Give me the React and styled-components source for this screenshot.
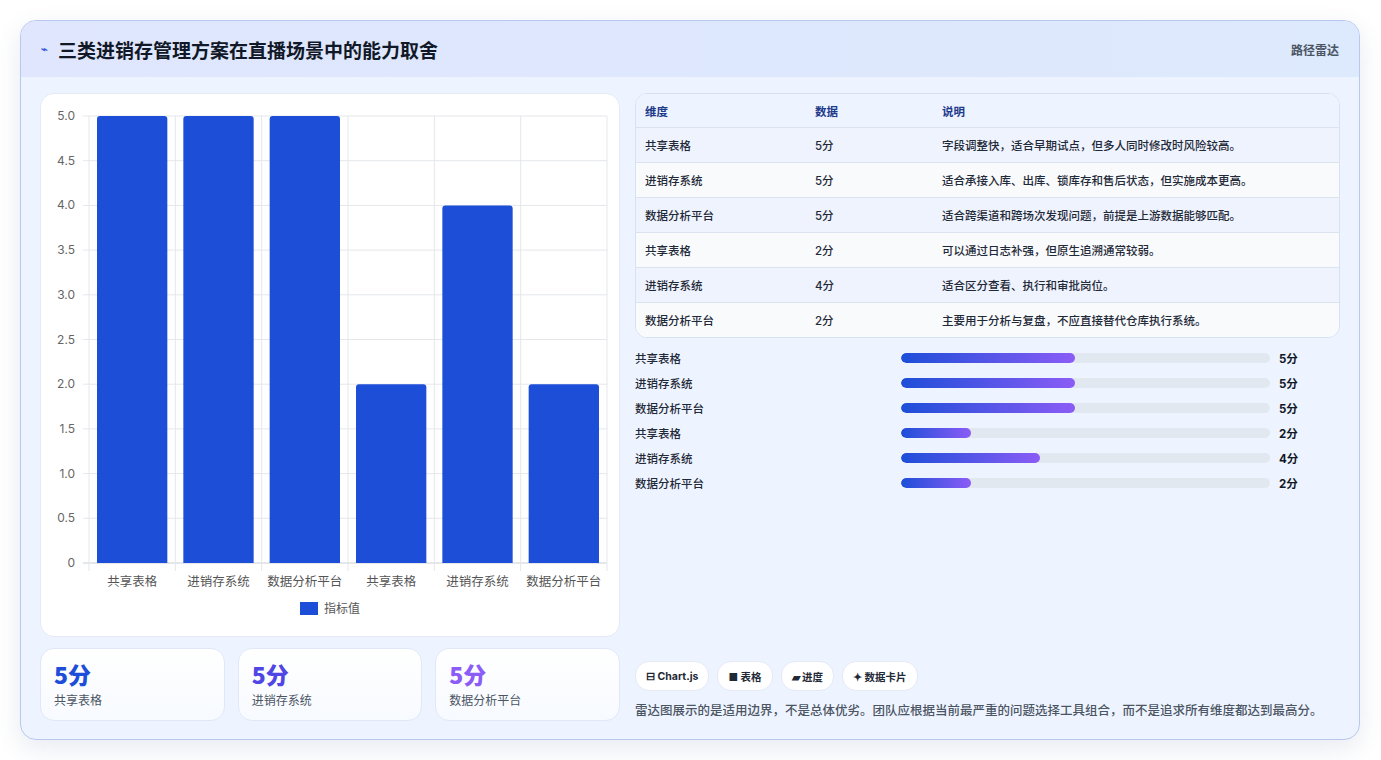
import React from "react";
import styled, { createGlobalStyle } from "styled-components";

const Global = createGlobalStyle`
  body { margin:0; background:#fff; font-family: Inter, "Noto Sans CJK SC", sans-serif; }
`;
const Page = styled.div`padding:20px 20px 20px 20px; height:760px; box-sizing:border-box;`;
const Card = styled.div`
  width:1340px; height:720px; box-sizing:border-box; border:1px solid #b9c8ee; border-radius:16px;
  background:#eef4ff; overflow:hidden; box-shadow:0 8px 24px rgba(60,80,140,0.12); display:flex; flex-direction:column;
`;
const Header = styled.div`
  height:56px; flex:none; background:linear-gradient(90deg,#dfe6fd,#dde9fd); display:flex; align-items:center;
  justify-content:space-between; padding:0 20px;
`;
const Title = styled.div`font-size:19px; font-weight:700; color:#111827; display:flex; align-items:center; gap:10px;`;
const Tag = styled.div`font-size:12px; color:#4b5563; font-weight:600;`;
const Body = styled.div`display:flex; gap:15px; padding:16px 19px 19px 19px; flex:1;`;
const Left = styled.div`width:580px; display:flex; flex-direction:column; gap:11px;`;
const ChartCard = styled.div`background:#fff; border:1px solid #e3e9f5; border-radius:14px; height:544px; box-sizing:border-box;`;
const Stats = styled.div`display:grid; grid-template-columns:repeat(3,1fr); gap:13px;`;
const Stat = styled.div`background:linear-gradient(180deg,#fff,#f7faff); border:1px solid #e0e8f7; border-radius:14px; height:73px; box-sizing:border-box; padding:10px 13px;`;
const StatNum = styled.div`font-size:23px; font-weight:800; color:${p => p.c}; line-height:30px; font-family:"Noto Sans CJK SC",sans-serif;`;
const StatLbl = styled.div`font-size:12px; color:#4b5563; margin-top:2px;`;
const Right = styled.div`flex:1; display:flex; flex-direction:column;`;
const Table = styled.div`border:1px solid #d8e1f1; border-radius:12px; overflow:hidden; background:#f8fbff;`;
const Row = styled.div`
  display:grid; grid-template-columns:170px 127px 1fr; height:${p => p.h || 35}px; align-items:center; padding-left:9px;
  font-size:11.5px; color:${p => p.head ? "#1e3a8a" : "#1f2937"}; font-weight:${p => p.head ? 600 : 500};
  background:${p => p.head ? "#eef4ff" : p.alt ? "#f8fafc" : "#eef3fe"}; border-top:${p => p.head ? "none" : "1px solid #dbe3f1"};
  box-sizing:border-box;
`;
const Bars = styled.div`display:flex; flex-direction:column; gap:9px; margin-top:12px;`;
const BarRow = styled.div`display:grid; grid-template-columns:266px 369px 1fr; align-items:center; height:16px; font-size:11.5px; color:#1f2937; font-weight:500;`;
const Track = styled.div`height:10px; border-radius:5px; background:#e2e8f0; overflow:hidden;`;
const Fill = styled.div`height:100%; border-radius:5px; background:linear-gradient(90deg,#1d4ed8,#8b5cf6);`;
const Val = styled.div`padding-left:9px; font-weight:700; font-size:11.5px; color:#111827;`;
const Spacer = styled.div`flex:1;`;
const Chips = styled.div`display:flex; gap:8px;`;
const Chip = styled.div`height:28px; padding:0 10px; border:1px solid #e3e9f5; border-radius:14px; background:#fff; display:flex; align-items:center; gap:4px; font-size:10.5px; font-weight:700; color:#1f2937;`;
const Note = styled.div`font-size:12.5px; color:#4b5563; line-height:20px; margin-top:10px; font-weight:500;`;

const data = [["共享表格",5,"字段调整快，适合早期试点，但多人同时修改时风险较高。"],["进销存系统",5,"适合承接入库、出库、锁库存和售后状态，但实施成本更高。"],["数据分析平台",5,"适合跨渠道和跨场次发现问题，前提是上游数据能够匹配。"],["共享表格",2,"可以通过日志补强，但原生追溯通常较弱。"],["进销存系统",4,"适合区分查看、执行和审批岗位。"],["数据分析平台",2,"主要用于分析与复盘，不应直接替代仓库执行系统。"]];

function Chart() {
  const x0 = 48, x1 = 566, yTop = 22, yBot = 469, cw = (x1 - x0) / 6;
  const ticks = [0,0.5,1,1.5,2,2.5,3,3.5,4,4.5,5];
  const y = v => yBot - (v / 5) * (yBot - yTop);
  return (
    <svg width="578" height="542" style={{display:"block"}}>
      {ticks.map(t => <g key={t}>
        <line x1={x0 - 6} x2={x1} y1={y(t)} y2={y(t)} stroke={t === 0 ? "#c9ced6" : "#e5e7eb"} />
        <text x={x0 - 14} y={y(t) + 4} fontSize="12" fill="#666" textAnchor="end" fontFamily="Inter,sans-serif">{t === 0 ? "0" : t.toFixed(1)}</text>
      </g>)}
      {Array.from({length:7}).map((_, i) => <line key={i} x1={x0 + i * cw} x2={x0 + i * cw} y1={yTop} y2={yBot + 8} stroke="#e5e7eb" />)}
      {data.map((d, i) => {
        const bx = x0 + i * cw + 8, bw = cw - 16, top = y(d[1]);
        return <g key={i}>
          <path d={`M${bx},${yBot} V${top + 3} Q${bx},${top} ${bx + 3},${top} H${bx + bw - 3} Q${bx + bw},${top} ${bx + bw},${top + 3} V${yBot} Z`} fill="#1d4ed8" />
          <text x={x0 + i * cw + cw / 2} y={yBot + 23} fontSize="12.5" fill="#555" textAnchor="middle" fontFamily="Noto Sans CJK SC,sans-serif">{d[0]}</text>
        </g>;
      })}
      <rect x="259" y="508" width="18" height="13" fill="#1d4ed8" />
      <text x="283" y="519" fontSize="12" fill="#555" fontFamily="Noto Sans CJK SC,sans-serif">指标值</text>
    </svg>
  );
}

export default function App() {
  return (
    <Page>
      <Global />
      <Card>
        <Header>
          <Title><span style={{fontSize:11,color:"#3b5bdb"}}>⌁</span>三类进销存管理方案在直播场景中的能力取舍</Title>
          <Tag>路径雷达</Tag>
        </Header>
        <Body>
          <Left>
            <ChartCard><Chart /></ChartCard>
            <Stats>
              <Stat><StatNum c="#1d4ed8">5分</StatNum><StatLbl>共享表格</StatLbl></Stat>
              <Stat><StatNum c="#4f46e5">5分</StatNum><StatLbl>进销存系统</StatLbl></Stat>
              <Stat><StatNum c="#8b5cf6">5分</StatNum><StatLbl>数据分析平台</StatLbl></Stat>
            </Stats>
          </Left>
          <Right>
            <Table>
              <Row head h={33}><div>维度</div><div>数据</div><div>说明</div></Row>
              {data.map((d, i) => <Row key={i} alt={i % 2 === 1}><div>{d[0]}</div><div>{d[1]}分</div><div>{d[2]}</div></Row>)}
            </Table>
            <Bars>
              {data.map((d, i) => <BarRow key={i}><div>{d[0]}</div><Track><Fill style={{width:`${d[1] * 9.45}%`}} /></Track><Val>{d[1]}分</Val></BarRow>)}
            </Bars>
            <Spacer />
            <Chips>
              <Chip>⊟ Chart.js</Chip><Chip>■ 表格</Chip><Chip>▰ 进度</Chip><Chip>✦ 数据卡片</Chip>
            </Chips>
            <Note>雷达图展示的是适用边界，不是总体优劣。团队应根据当前最严重的问题选择工具组合，而不是追求所有维度都达到最高分。</Note>
          </Right>
        </Body>
      </Card>
    </Page>
  );
}
